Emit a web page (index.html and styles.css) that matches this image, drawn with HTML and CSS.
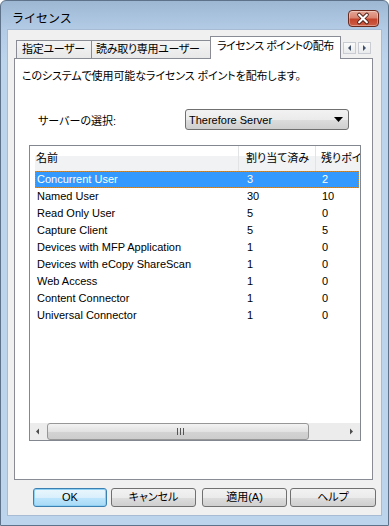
FILE: index.html
```html
<!DOCTYPE html>
<html lang="ja">
<head>
<meta charset="utf-8">
<title>ライセンス</title>
<link rel="stylesheet" href="styles.css">
</head>
<body>
<div class="window">
  <div class="titlebar">
    <span class="title">ライセンス</span>
    <div class="close">
      <svg width="31" height="17" viewBox="0 0 31 17">
        <path d="M11.5 4.5 L19.5 12.5 M19.5 4.5 L11.5 12.5" stroke="#4a1d14" stroke-width="4" stroke-linecap="round"/>
        <path d="M11.5 4.5 L19.5 12.5 M19.5 4.5 L11.5 12.5" stroke="#ffffff" stroke-width="2.2" stroke-linecap="round"/>
      </svg>
    </div>
  </div>
  <div class="client">
    <div class="tabs">
      <div class="tab t1">指定ユーザー</div>
      <div class="tab t2">読み取り専用ユーザー</div>
      <div class="tab active">ライセンス ポイントの配布</div>
      <div class="tabscroll">
        <span class="sbtn"><svg width="11" height="10" viewBox="0 0 11 10"><path d="M4 5 L7 2 L7 8 Z" fill="#40506a"/></svg></span>
        <span class="sbtn"><svg width="11" height="10" viewBox="0 0 11 10"><path d="M7 5 L4 2 L4 8 Z" fill="#40506a"/></svg></span>
      </div>
    </div>
    <div class="panel">
      <p class="desc">このシステムで使用可能なライセンス ポイントを配布します。</p>
      <div class="server-row">
        <span class="label">サーバーの選択:</span>
        <div class="select">
          <span>Therefore Server</span>
          <svg width="9" height="5" viewBox="0 0 9 5"><path d="M0 0 H9 L4.5 5 Z" fill="#000"/></svg>
        </div>
      </div>
      <div class="list">
        <div class="head">
          <div class="hc c1">名前</div>
          <div class="hc c2">割り当て済み</div>
          <div class="hc c3">残りポイント</div>
        </div>
        <div class="rows">
          <div class="row sel"><span>Concurrent User</span><span>3</span><span>2</span></div>
          <div class="row"><span>Named User</span><span>30</span><span>10</span></div>
          <div class="row"><span>Read Only User</span><span>5</span><span>0</span></div>
          <div class="row"><span>Capture Client</span><span>5</span><span>5</span></div>
          <div class="row"><span>Devices with MFP Application</span><span>1</span><span>0</span></div>
          <div class="row"><span>Devices with eCopy ShareScan</span><span>1</span><span>0</span></div>
          <div class="row"><span>Web Access</span><span>1</span><span>0</span></div>
          <div class="row"><span>Content Connector</span><span>1</span><span>0</span></div>
          <div class="row"><span>Universal Connector</span><span>1</span><span>0</span></div>
        </div>
        <div class="hscroll">
          <div class="arrow"><svg width="17" height="17" viewBox="0 0 17 17"><path d="M6 8.5 L9 5.5 L9 11.5 Z" fill="#4d4d4d"/></svg></div>
          <div class="thumb">
            <svg width="7" height="7" viewBox="0 0 7 7"><path d="M0.5 0 V7 M3.5 0 V7 M6.5 0 V7" stroke="#555" stroke-width="1"/></svg>
          </div>
          <div class="track"></div>
          <div class="arrow"><svg width="17" height="17" viewBox="0 0 17 17"><path d="M10 8.5 L7 5.5 L7 11.5 Z" fill="#4d4d4d"/></svg></div>
        </div>
      </div>
    </div>
    <div class="buttons">
      <div class="btn ok">OK</div>
      <div class="btn cancel">キャンセル</div>
      <div class="btn apply">適用(A)</div>
      <div class="btn help">ヘルプ</div>
    </div>
  </div>
</div>
</body>
</html>
```
FILE: styles.css
```css
html, body {
  margin: 0;
  padding: 0;
  background: #ffffff;
}
body {
  font-family: "Liberation Sans", "Noto Sans CJK JP", sans-serif;
  font-size: 11px;
  color: #000;
  font-feature-settings: "palt";
}
.window {
  width: 389px;
  height: 526px;
  box-sizing: border-box;
  border: 1px solid #5e7389;
  border-radius: 6px 6px 0 0;
  background: linear-gradient(#9db7d3 0px, #b3cbe5 28px, #bcd4ec 60px, #bcd4ec 100%);
  padding: 0 7px 10px 7px;
  display: flex;
  flex-direction: column;
}
.titlebar {
  height: 29px;
  display: flex;
  align-items: flex-start;
  justify-content: space-between;
}
.title {
  font-family: "Noto Sans CJK JP", sans-serif;
  font-size: 12px;
  line-height: 14px;
  margin: 10px 0 0 4px;
  font-feature-settings: normal;
}
.close {
  width: 31px;
  height: 17px;
  margin: 9px 2px 0 0;
  box-sizing: border-box;
  border: 1px solid #6b2a1e;
  border-radius: 4px;
  background: linear-gradient(#e6a797 0%, #d98470 45%, #c4442c 55%, #cd5e45 100%);
  box-shadow: inset 0 0 0 1px rgba(255,255,255,0.35);
  display: flex;
}
.close svg { margin: -1px 0 0 -1px; }
.client {
  flex: 1;
  background: #f0f0f0;
  box-shadow: 0 0 0 1px #a7bcd4;
  padding: 6px 8px 0 6px;
  display: flex;
  flex-direction: column;
}
.tabs {
  height: 22px;
  display: flex;
  align-items: flex-end;
  padding-left: 2px;
  position: relative;
  z-index: 1;
}
.tab {
  box-sizing: border-box;
  height: 18px;
  border: 1px solid #898c95;
  border-bottom: none;
  background: linear-gradient(#f4f4f4, #e8e8e8);
  line-height: 16px;
  white-space: nowrap;
  overflow: hidden;
  padding-left: 5px;
  letter-spacing: -0.3px;
}
.t1 { width: 76px; }
.t2 { width: 120px; border-left: none; padding-left: 4px; }
.tab.active {
  width: 131px;
  height: 23px;
  margin-left: -2px;
  margin-bottom: -1px;
  background: #ffffff;
  border-bottom: none;
  padding-left: 6px;
  padding-top: 2px;
  line-height: 14px;
  letter-spacing: -0.5px;
}
.tabscroll {
  display: flex;
  gap: 2px;
  margin-left: 2px;
  align-self: flex-start;
  margin-top: 6px;
}
.sbtn {
  width: 11px;
  height: 10px;
  border: 1px solid #c9ccd2;
  background: linear-gradient(#fbfbfb, #e9eaec);
  display: flex;
}
.panel {
  height: 422px;
  box-sizing: border-box;
  border: 1px solid #898c95;
  background: #ffffff;
  display: flex;
  flex-direction: column;
}
.desc {
  margin: 11px 0 0 7px;
  line-height: 13px;
  letter-spacing: -0.1px;
}
.server-row {
  display: flex;
  align-items: center;
  margin-top: 26px;
  padding-left: 23px;
}
.label {
  width: 147px;
}
.select {
  width: 164px;
  height: 21px;
  box-sizing: border-box;
  border: 1px solid #707070;
  border-radius: 3px;
  background: linear-gradient(#f2f2f2 0%, #ebebeb 50%, #dddddd 51%, #cfcfcf 100%);
  display: flex;
  align-items: center;
  justify-content: space-between;
  padding: 0 5px 0 3px;
}
.list {
  margin: 15px 0 0 14px;
  width: 332px;
  height: 296px;
  box-sizing: border-box;
  border: 1px solid #828790;
  display: flex;
  flex-direction: column;
  overflow: hidden;
}
.head {
  height: 25px;
  flex: none;
  display: grid;
  grid-template-columns: 204px 77px 100px;
  margin-left: 5px;
  background: linear-gradient(#ffffff 0%, #ffffff 40%, #f1f2f4 41%, #f1f2f4 100%);
}
.hc {
  line-height: 25px;
  white-space: nowrap;
  overflow: hidden;
  border-right: 1px solid #e2e3e5;
}
.head .c1 { padding-left: 1px; }
.head .c2 { padding-left: 7px; }
.head .c3 { padding-left: 5px; border-right: none; }
.rows {
  flex: 1;
  margin-left: 5px;
  margin-right: 1px;
}
.row {
  height: 17px;
  box-sizing: border-box;
  display: grid;
  grid-template-columns: 204px 77px 1fr;
  line-height: 15px;
  border: 1px solid transparent;
  white-space: nowrap;
}
.row span:nth-child(1) { padding-left: 1px; }
.row span:nth-child(2) { padding-left: 7px; }
.row span:nth-child(3) { padding-left: 5px; }
.row.sel {
  background: #3399ff;
  color: #ffffff;
  border: 1px dotted #c98a3c;
}
.hscroll {
  height: 17px;
  flex: none;
  display: flex;
  background: #ececec;
}
.arrow {
  width: 17px;
  height: 17px;
  display: flex;
}
.thumb {
  width: 262px;
  box-sizing: border-box;
  border: 1px solid #979797;
  border-radius: 3px;
  background: linear-gradient(#f3f3f3 0%, #e2e2e2 50%, #d3d3d3 51%, #cccccc 100%);
  display: flex;
  align-items: center;
  justify-content: center;
  padding-left: 4px;
}
.track {
  flex: 1;
}
.buttons {
  display: flex;
  justify-content: flex-end;
  margin: 8px -3px 0 0;
}
.btn {
  width: 85px;
  height: 19px;
  box-sizing: border-box;
  border: 1px solid #707070;
  border-radius: 3px;
  background: linear-gradient(#f2f2f2 0%, #ebebeb 50%, #dddddd 51%, #cfcfcf 100%);
  text-align: center;
  line-height: 17px;
}
.btn.ok {
  width: 74px;
  border-color: #3c7fb1;
  box-shadow: inset 0 0 0 1px #8ed0f3;
  background: linear-gradient(#eaf6fd 0%, #d9f0fc 50%, #bee6fd 51%, #a7d9f5 100%);
}
.btn.cancel { margin-left: 4px; }
.btn.apply { margin-left: 6px; }
.btn.help { margin-left: 3px; width: 86px; }
```
